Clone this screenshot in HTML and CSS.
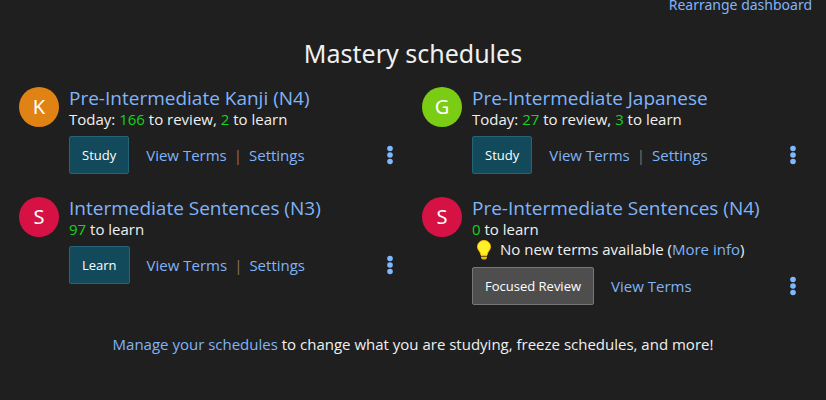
FILE: index.html
```html
<!DOCTYPE html>
<html lang="en">
<head>
    <meta charset="UTF-8">
    <meta name="viewport" content="width=device-width, initial-scale=1.0">
    <title>Mastery schedules</title>
    <link rel="stylesheet" href="styles.css">
</head>
<body>
    <div class="dashboard">
        <div class="top-links">
            <a href="#">Rearrange dashboard</a>
        </div>

        <h2>Mastery schedules</h2>

        <div class="schedules">
            <div class="schedule">
                <div class="avatar orange">K</div>
                <div class="details">
                    <a href="#" class="title">Pre-Intermediate Kanji (N4)</a>
                    <div class="status">Today: <span class="count">166</span> to review, <span class="count">2</span> to learn</div>
                    <div class="actions">
                        <button type="button" class="btn">Study</button>
                        <a href="#">View Terms</a>
                        <span class="divider">|</span>
                        <a href="#">Settings</a>
                        <button type="button" class="menu" aria-label="More options">
                            <svg width="6" height="20" viewBox="0 0 6 20"><circle cx="3" cy="3.5" r="2.8"/><circle cx="3" cy="10" r="2.8"/><circle cx="3" cy="16.5" r="2.8"/></svg>
                        </button>
                    </div>
                </div>
            </div>

            <div class="schedule">
                <div class="avatar green">G</div>
                <div class="details">
                    <a href="#" class="title">Pre-Intermediate Japanese</a>
                    <div class="status">Today: <span class="count">27</span> to review, <span class="count">3</span> to learn</div>
                    <div class="actions">
                        <button type="button" class="btn">Study</button>
                        <a href="#">View Terms</a>
                        <span class="divider">|</span>
                        <a href="#">Settings</a>
                        <button type="button" class="menu" aria-label="More options">
                            <svg width="6" height="20" viewBox="0 0 6 20"><circle cx="3" cy="3.5" r="2.8"/><circle cx="3" cy="10" r="2.8"/><circle cx="3" cy="16.5" r="2.8"/></svg>
                        </button>
                    </div>
                </div>
            </div>

            <div class="schedule">
                <div class="avatar red">S</div>
                <div class="details">
                    <a href="#" class="title">Intermediate Sentences (N3)</a>
                    <div class="status"><span class="count">97</span> to learn</div>
                    <div class="actions">
                        <button type="button" class="btn">Learn</button>
                        <a href="#">View Terms</a>
                        <span class="divider">|</span>
                        <a href="#">Settings</a>
                        <button type="button" class="menu" aria-label="More options">
                            <svg width="6" height="20" viewBox="0 0 6 20"><circle cx="3" cy="3.5" r="2.8"/><circle cx="3" cy="10" r="2.8"/><circle cx="3" cy="16.5" r="2.8"/></svg>
                        </button>
                    </div>
                </div>
            </div>

            <div class="schedule">
                <div class="avatar red">S</div>
                <div class="details">
                    <a href="#" class="title">Pre-Intermediate Sentences (N4)</a>
                    <div class="status"><span class="count">0</span> to learn</div>
                    <div class="notice">
                        <svg class="bulb" width="14" height="20" viewBox="0 0 14 20">
                            <path d="M7 .5C3.200 .5 .5 3.200 .5 6.800c0 2.800 2 4.200 2.900 6.300.3.700.5 1.400.6 2.200h6c.1-.8.300-1.500.6-2.200.9-2.100 2.900-3.500 2.900-6.300C13.500 3.200 10.800.5 7 .5z" fill="#fff02a" stroke="#f8b800"/>
                            <path d="M4 15h6v3l-1.500 1.500h-3L4 18z" fill="#f2b705"/>
                            <path d="M4 16.500h6" stroke="#7a5a10"/>
                        </svg>
                        <span>No new terms available (<a href="#">More info</a>)</span>
                    </div>
                    <div class="actions">
                        <button type="button" class="btn gray">Focused Review</button>
                        <a href="#">View Terms</a>
                        <button type="button" class="menu" aria-label="More options">
                            <svg width="6" height="20" viewBox="0 0 6 20"><circle cx="3" cy="3.5" r="2.8"/><circle cx="3" cy="10" r="2.8"/><circle cx="3" cy="16.5" r="2.8"/></svg>
                        </button>
                    </div>
                </div>
            </div>
        </div>

        <p class="manage"><a href="#">Manage your schedules</a> to change what you are studying, freeze schedules, and more!</p>
    </div>
</body>
</html>
```
FILE: styles.css
```css
body {
    margin: 0;
    background-color: #1f1f1f;
    color: #f0f0f0;
    font-family: "Noto Sans", sans-serif;
    font-size: 14px;
    line-height: 19px;
}

a {
    color: #80b4f8;
    text-decoration: none;
}

a:hover {
    text-decoration: underline;
}

.dashboard {
    padding: 0 10px;
}

.top-links {
    height: 14px;
    display: flex;
    justify-content: flex-end;
    align-items: flex-end;
    padding-right: 4px;
}

h2 {
    margin: 22px 0 17px;
    font-size: 25px;
    font-weight: normal;
    line-height: 34px;
    text-align: center;
}

.schedules {
    display: grid;
    grid-template-columns: 1fr 1fr;
    row-gap: 23px;
}

.schedule {
    display: flex;
    gap: 10px;
    padding: 0 9px;
}

.avatar {
    flex: none;
    width: 40px;
    height: 40px;
    border-radius: 50%;
    color: #fff;
    font-size: 20px;
    line-height: 40px;
    text-align: center;
}

.orange {
    background-color: #e08214;
}

.green {
    background-color: #7acc14;
}

.red {
    background-color: #d61245;
}

.details {
    flex: 1;
}

.title {
    display: block;
    font-family: "Open Sans", sans-serif;
    font-size: 19px;
    line-height: 23px;
}

.status,
.notice,
.manage {
    font-family: "Open Sans", sans-serif;
    font-size: 15px;
}

.count {
    color: #14d21e;
}

.notice {
    display: flex;
    align-items: center;
    gap: 9px;
    height: 21px;
    padding-left: 5px;
}

.actions {
    display: flex;
    align-items: center;
    margin-top: 7px;
    font-family: "Open Sans", sans-serif;
    font-size: 15px;
}

.btn {
    height: 38px;
    margin-right: 17px;
    padding: 0 12px;
    border: 1px solid #266378;
    border-radius: 2px;
    background-color: #12495b;
    color: #fff;
    font-family: inherit;
    font-size: 13px;
    cursor: pointer;
}

.btn.gray {
    border-color: #777;
    background-color: #4e4e4e;
}

.divider {
    margin: 0 7px;
    color: #8c7460;
}

.menu {
    display: flex;
    margin-left: auto;
    padding: 4px 11px;
    border: none;
    background: none;
    cursor: pointer;
}

.menu svg {
    fill: #80b8ff;
}

.manage {
    margin: 30px 0;
    text-align: center;
}
```
